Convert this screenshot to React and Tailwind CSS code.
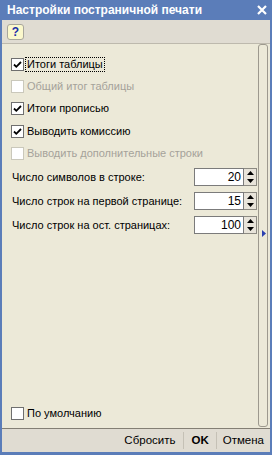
import React from 'react';

const font = "font-['Liberation_Sans',Arial,sans-serif]";

const Check = ({ checked, disabled }) => (
    <span className={`flex h-[13px] w-[13px] shrink-0 items-center justify-center border bg-white ${disabled ? 'border-[#cac8bb]' : 'border-[#6f6f6f]'}`}>
        {checked && (
            <svg width="9" height="9" viewBox="0 0 9 9">
                <path d="M1 4.5 L3.3 6.8 L8 2" stroke="#000" strokeWidth="1.8" fill="none" />
            </svg>
        )}
    </span>
);

const CheckRow = ({ label, checked, disabled, focused }) => (
    <div className="flex h-[22.4px] items-center">
        <Check checked={checked} disabled={disabled} />
        <span className={`ml-[2px] whitespace-nowrap px-[1px] leading-[13px] ${focused ? 'outline-1 outline-dotted outline-black' : ''} ${disabled ? 'text-[#a5a29a]' : 'text-black'}`}>
            {label}
        </span>
    </div>
);

const Spinner = () => (
    <div className="flex h-[18px] w-[13px] flex-col items-center justify-between border border-l-0 border-[#8c8a82] bg-[#e8e4da] py-[2px]">
        <svg width="7" height="6" viewBox="0 0 7 6"><path d="M3.5 0 L7 4 L0 4 Z" fill="#000" /></svg>
        <svg width="7" height="6" viewBox="0 0 7 6"><path d="M0 2 L7 2 L3.5 6 Z" fill="#000" /></svg>
    </div>
);

const NumberRow = ({ label, value }) => (
    <div className="flex h-[24px] items-center justify-between pl-[1px]">
        <span className="whitespace-nowrap text-black">{label}</span>
        <div className="flex">
            <div className="flex h-[18px] w-[50px] items-center justify-end border border-[#7b7b7b] bg-white pr-[2px] text-[12px] text-black">{value}</div>
            <Spinner />
        </div>
    </div>
);

const App = () => {
    return (
        <div className={`flex h-[455px] w-[272px] flex-col bg-[#5b7db9] text-[11px] ${font}`}>
            <div className="flex h-[20px] shrink-0 items-center justify-between pl-[7px] pr-[5px]">
                <span className="text-[12px] font-bold text-white">Настройки постраничной печати</span>
                <svg width="10" height="10" viewBox="0 0 10 10">
                    <path d="M1 1 L9 9 M9 1 L1 9" stroke="#fff" strokeWidth="2.2" />
                </svg>
            </div>
            <div className="mx-[2px] mb-[3px] flex flex-1 flex-col bg-[#ece9d8]">
                <div className="flex h-[24px] shrink-0 items-center border-b border-[#bdb9ad] bg-[#e0dcd2] pl-[5px]">
                    <div className="flex h-[16px] w-[17px] items-center justify-center rounded-[3px] border border-[#a8a69c] bg-[#fbf8cc] text-[12px] font-bold leading-none text-[#1a2fa8]">?</div>
                </div>
                <div className="flex flex-1">
                    <div className="flex flex-1 flex-col pl-[9px] pr-[1px] pt-[9px]">
                        <CheckRow label="Итоги таблицы" checked focused />
                        <CheckRow label="Общий итог таблицы" disabled />
                        <CheckRow label="Итоги прописью" checked />
                        <CheckRow label="Выводить комиссию" checked />
                        <CheckRow label="Выводить дополнительные строки" disabled />
                        <NumberRow label="Число символов в строке:" value="20" />
                        <NumberRow label="Число строк на первой странице:" value="15" />
                        <NumberRow label="Число строк на ост. страницах:" value="100" />
                        <div className="flex-1" />
                        <div className="mb-[3px]">
                            <CheckRow label="По умолчанию" />
                        </div>
                    </div>
                    <div className="mb-[1px] mr-[2px] flex w-[10px] flex-col items-center justify-center rounded-[3px] border border-[#9d998e] pb-[4px]">
                        <svg width="4" height="7" viewBox="0 0 4 7" className="ml-[1px]"><path d="M0 0 L4 3.5 L0 7 Z" fill="#2a3fb0" /></svg>
                    </div>
                </div>
                <div className="flex h-[24px] shrink-0 items-center justify-end border-t border-[#837f74] bg-[#e0dcd2] pr-[4px] text-[11.5px] text-black">
                    <span className="px-[8px]">Сбросить</span>
                    <span className="h-[17px] w-px bg-[#c5c1b6]" />
                    <span className="px-[7px] font-bold">OK</span>
                    <span className="h-[17px] w-px bg-[#c5c1b6]" />
                    <span className="pl-[6px] pr-[2px]">Отмена</span>
                </div>
            </div>
        </div>
    );
};

export default App;
